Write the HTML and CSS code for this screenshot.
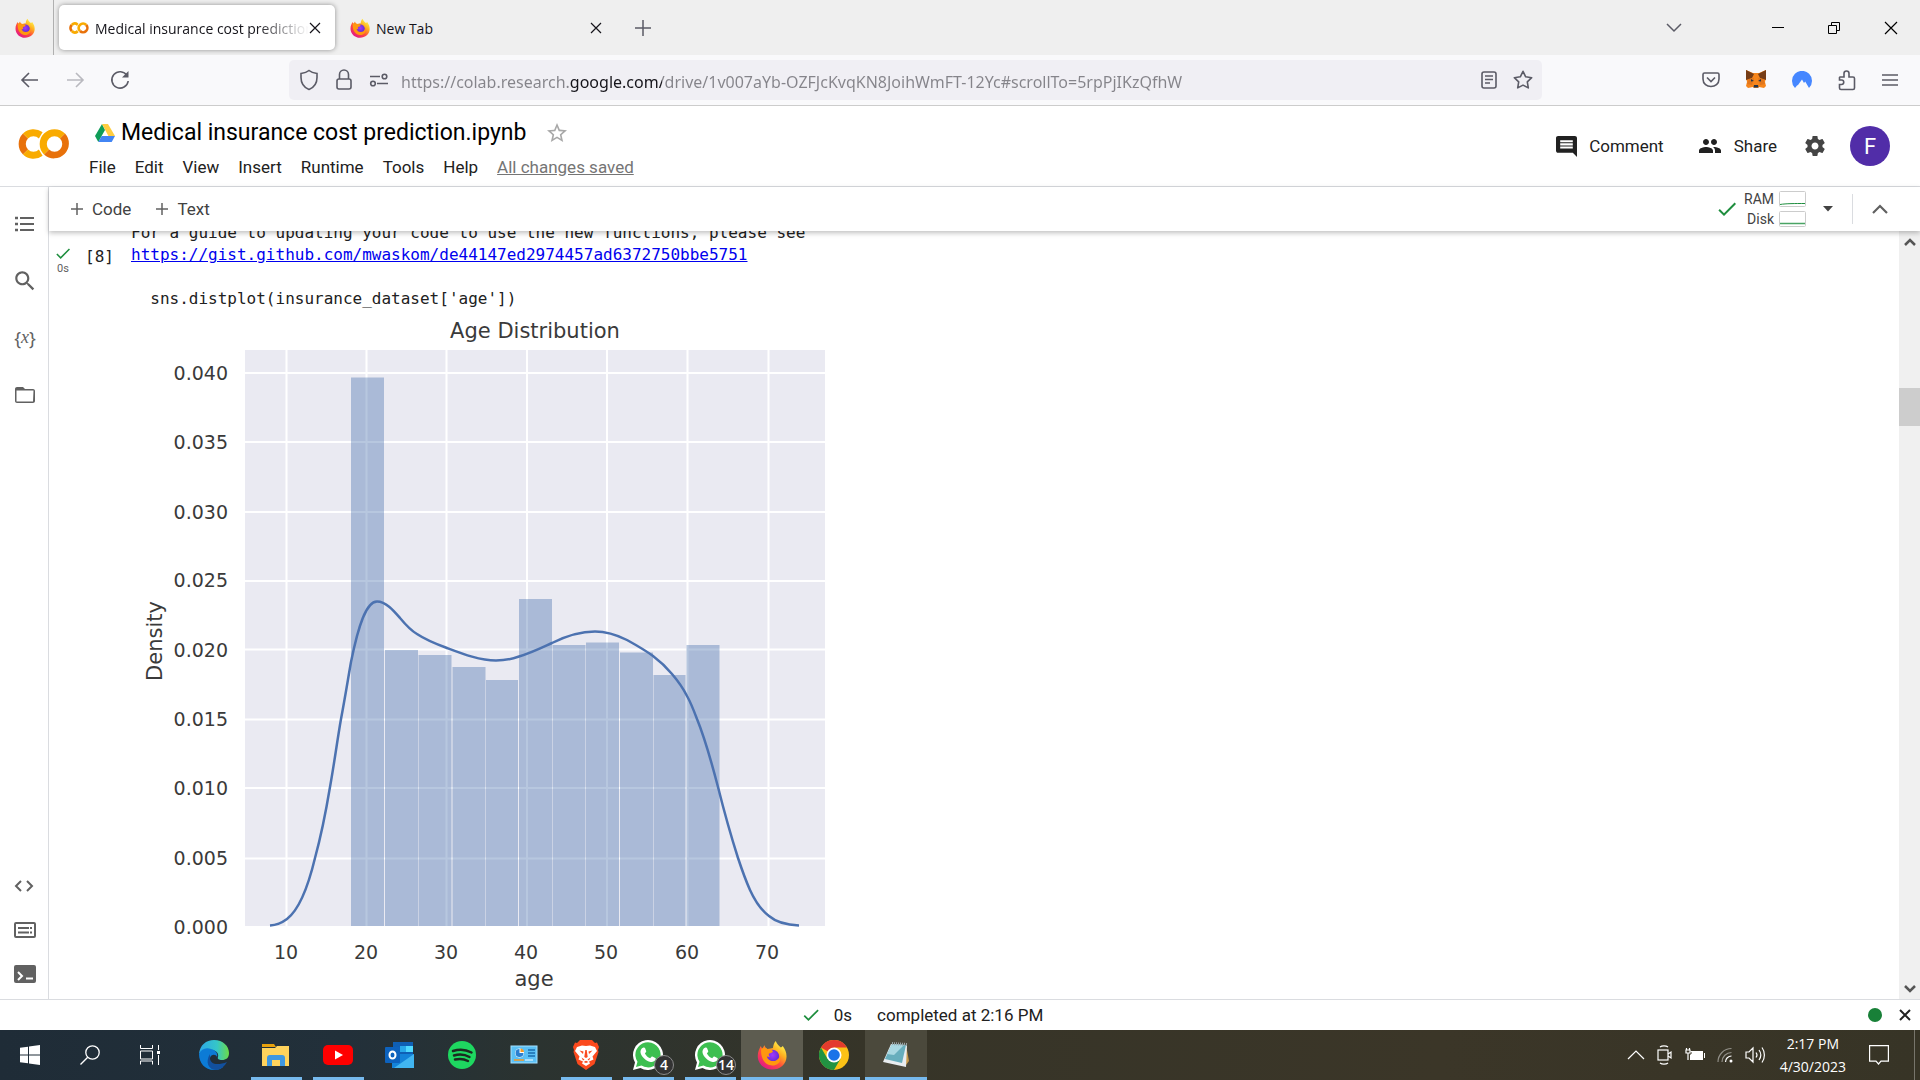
FILE: index.html
```html
<!DOCTYPE html>
<html lang="en">
<head>
<meta charset="utf-8">
<title>Medical insurance cost prediction.ipynb</title>
<link rel="stylesheet" href="styles.css">
</head>
<body>
<svg class="defs" aria-hidden="true">
  <defs>
    <linearGradient id="ff-body" x1="0.85" y1="0.1" x2="0.2" y2="0.95"><stop offset="0" stop-color="#fff44f"/><stop offset="0.3" stop-color="#ffb01f"/><stop offset="0.6" stop-color="#ff4f3c"/><stop offset="1" stop-color="#e31587"/></linearGradient>
    <radialGradient id="ff-core" cx="0.5" cy="0.4" r="0.6"><stop offset="0" stop-color="#a238ff"/><stop offset="1" stop-color="#592acb"/></radialGradient>
    <symbol id="firefox" viewBox="0 0 32 32">
      <path fill="url(#ff-body)" d="M20 1c1 3 3.500 5 5.500 7 1.200-.5 1.500-1 2-1.500 2.500 3.500 4 7 4 11C31.500 25.500 24.500 31.500 16 31.500S.8 25 .8 17C.8 12.500 2.500 9.500 4 6.500l1.500 2.800L8 5.500c.5 2 1.500 3 3 4 3-.5 4.500-.5 6-1C17.500 5.500 18 3 20 1z"/>
      <circle cx="16.500" cy="17.500" r="7.200" fill="url(#ff-core)"/>
      <path fill="#ff980e" d="M4.500 9.500C7 8 10 8.500 11.500 10c2.500-.3 4.500.5 5.500 2-.5 1.500-2.500 2.200-4.200 2.500-.6 1.500 0 2.500 1.200 3.200-1.500.5-2.600.2-3.500-.4.500 3.200 3.500 5.200 6.500 5.200 4 0 7-2.800 7.300-6.500C27 25 20 28 15 27 7.500 26 3.500 18 4.500 9.500z"/>
    </symbol>
    <symbol id="colab" viewBox="0 5 24 14">
      <path fill="#e8710a" d="M4.540 9.460 2.190 7.100a6.930 6.930 0 0 0 0 9.790l2.360-2.360a3.590 3.590 0 0 1-.01-5.070z"/>
      <path fill="#f9ab00" d="M2.190 7.100 4.540 9.460a3.590 3.590 0 0 1 5.080 0l1.710-2.930-.1-.08a6.930 6.930 0 0 0-9.040.65zM11.340 17.460 9.620 14.540a3.590 3.590 0 0 1-5.080 0L2.190 16.900a6.930 6.930 0 0 0 9 .65zM12 7.100a6.930 6.930 0 0 0 0 9.790l2.360-2.360a3.590 3.590 0 1 1 5.080-5.080L21.810 7.100a6.930 6.930 0 0 0-9.810 0z"/>
      <path fill="#e8710a" d="M21.810 7.100 19.460 9.460a3.590 3.590 0 0 1-5.080 5.080L12.020 16.900a6.930 6.930 0 0 0 9.790-9.790z"/>
    </symbol>
    <symbol id="check" viewBox="3 5 18 14"><path fill="#1e8e3e" d="M9 16.170 4.830 12l-1.420 1.410L9 19 21 7l-1.410-1.410z"/></symbol>
    <symbol id="cross" viewBox="0 0 12 12"><path d="M1 1l10 10M11 1 1 11" fill="none" stroke="currentColor" stroke-width="1.200"/></symbol>
    <symbol id="whatsapp" viewBox="0 0 30 30">
      <path fill="#fff" d="M0 30 2 22.500A15 15 0 1 1 7.500 28z"/>
      <path fill="#3dbf50" d="M3 27l1.500-5.200A12.600 12.600 0 1 1 8.500 25.600z"/>
      <path fill="#fff" d="M10.500 7.500c.7-.2 1.200 0 1.500.6l1.200 2.800c.2.500 0 .9-1.300 2.500 1.300 2.400 2.900 3.800 5.300 4.800 1.300-1.700 1.600-2 2.200-1.700l2.900 1.400c.5.300.5.600.3 1.400-.8 2.300-3.200 3-5 2.600-4.800-1-8.900-5-10-8.900-.5-2.200.5-4.900 2.900-5.500z"/>
    </symbol>
  </defs>
</svg>

<header class="tabs">
  <div class="tab-pinned"><svg width="20" height="20"><use href="#firefox"/></svg></div>
  <div class="tab tab-active">
    <svg width="20" height="12"><use href="#colab"/></svg>
    <span class="tab-title tab-fade">Medical insurance cost prediction</span>
    <button class="bare" aria-label="Close tab"><svg width="12" height="12"><use href="#cross"/></svg></button>
  </div>
  <div class="tab">
    <svg width="20" height="20"><use href="#firefox"/></svg>
    <span class="tab-title">New Tab</span>
    <button class="bare" aria-label="Close tab"><svg width="12" height="12"><use href="#cross"/></svg></button>
  </div>
  <button class="bare new-tab" aria-label="New tab"><svg width="16" height="16"><path d="M8 0v16M0 8h16" stroke="#5b5b66" stroke-width="1.500"/></svg></button>
  <div class="window-tools">
    <button class="bare list-tabs" aria-label="List all tabs"><svg width="16" height="10"><path d="M1 1l7 7 7-7" fill="none" stroke="#5b5b66" stroke-width="1.500"/></svg></button>
    <button class="bare" aria-label="Minimize"><svg width="12" height="12"><path d="M0 5.500h12" stroke="#000"/></svg></button>
    <button class="bare" aria-label="Restore"><svg width="12" height="12"><path d="M.5 3.500h8v8h-8zM3.500 3.500v-3h8v8h-3" fill="none" stroke="#000"/></svg></button>
    <button class="bare" aria-label="Close window"><svg width="14" height="14"><path d="M1 1l12 12M13 1 1 13" stroke="#000" stroke-width="1.200"/></svg></button>
  </div>
</header>

<nav class="navbar">
  <button class="bare" aria-label="Back"><svg width="20" height="20"><path d="M18 10H2M9 3l-7 7 7 7" class="line"/></svg></button>
  <button class="bare dim" aria-label="Forward"><svg width="20" height="20"><path d="M2 10h16M11 3l7 7-7 7" class="line"/></svg></button>
  <button class="bare" aria-label="Reload"><svg width="20" height="20"><path d="M17 5.500A8.200 8.200 0 1 0 18.200 11" class="line"/><path d="M18.500 1v6.500H12z" fill="#5b5b66"/></svg></button>
  <div class="urlbar">
    <svg width="20" height="22"><path d="M10 1.500c2 1.700 5 2.600 8 3v4c0 5.500-3 10-8 12-5-2-8-6.500-8-12v-4c3-.4 6-1.300 8-3z" class="line"/></svg>
    <svg width="18" height="22"><path d="M4.500 10V5.500a4.500 4.500 0 0 1 9 0V10" class="line"/><rect x="2" y="10" width="14" height="10" rx="2" class="line"/></svg>
    <svg width="20" height="14"><path d="M1 3.500h10M8 10.500h11" class="line"/><circle cx="15.500" cy="3.500" r="2.300" class="line"/><circle cx="4" cy="10.500" r="2.300" class="line"/></svg>
    <input class="url" type="text" aria-label="Address" value="https://colab.research.google.com/drive/1v007aYb-OZFJcKvqKN8JoihWmFT-12Yc#scrollTo=5rpPjIKzQfhW">
    <button class="bare" aria-label="Reader view"><svg width="16" height="18"><rect x="1" y="1" width="14" height="16" rx="2" class="line"/><path d="M4 5h8M4 8.500h8M4 12h5" class="line"/></svg></button>
    <button class="bare" aria-label="Bookmark"><svg width="20" height="20" viewBox="0 0 20 20"><path d="M10 1.300l2.700 5.500 6 .9-4.400 4.200 1 6-5.300-2.800-5.300 2.800 1-6L1.300 7.700l6-.9z" class="line" stroke-linejoin="round"/></svg></button>
  </div>
  <div class="extensions">
    <button class="bare" aria-label="Pocket"><svg width="18" height="18"><path d="M2.500 2h13c.8 0 1.500.6 1.500 1.500V8c0 10-16 10-16 0V3.500C1 2.600 1.700 2 2.500 2z" class="line"/><path d="M5 6.500l4 4 4-4" class="line"/></svg></button>
    <button class="bare" aria-label="MetaMask"><svg width="20" height="20"><path fill="#f6851b" d="M0 0l7 3h6l7-3v8l-1 4 1 4-2 2-5-1-1 1H8l-1-1-5 1-2-2 1-4-1-4z"/><path fill="#763d16" d="M0 0l8 4-2 4-6 2zM20 0l-8 4 2 4 6 2z"/><path fill="#e2761b" d="M3 9l5-1-2 7-5-1zM17 9l-5-1 2 7 5-1z"/><path fill="#233447" d="M5 9l3 2-3 .5zM15 9l-3 2 3 .5zM8 15h4l.5 2.500h-5z"/></svg></button>
    <button class="bare" aria-label="VPN"><svg width="20" height="18"><path fill="#4687ff" d="M3 17A10 10 0 1 1 17 17l-3.800-6.500-1.200 1.500-2-3.500-4 5.500-1 .5z"/></svg></button>
    <button class="bare" aria-label="Extensions"><svg width="18" height="22"><path d="M2 8h4V4.500a2.500 2.500 0 0 1 5 0V8h4c1 0 1.500.5 1.500 1.500V19c0 1-.5 1.500-1.500 1.500H3c-1 0-1.500-.5-1.500-1.500v-3.500h2a2 2 0 0 0 0-4.500h-2V8.500z" class="line"/></svg></button>
    <button class="bare" aria-label="Menu"><svg width="16" height="14"><path d="M0 2h16M0 7h16M0 12h16" class="line"/></svg></button>
  </div>
</nav>

<header class="doc-head">
  <a class="logo" href="#" aria-label="Colab"><svg width="52" height="30"><use href="#colab"/></svg></a>
  <div class="doc-info">
    <div class="doc-title-row">
      <svg width="20" height="18"><path fill="#0f9d58" d="M7 0 0 12l3.300 6L10 6z"/><path fill="#ffcd40" d="M7 0h6l7 12h-6.600z"/><path fill="#4285f4" d="M6.700 12H20l-3.300 6H3.300z"/></svg>
      <h1>Medical insurance cost prediction.ipynb</h1>
      <button class="bare star" aria-label="Star"><svg width="22" height="22" viewBox="1 1 22 22"><path fill="#a8a8a8" d="M22 9.240l-7.190-.62L12 2 9.190 8.630 2 9.240l5.460 4.730L5.820 21 12 17.270 18.180 21l-1.630-7.030L22 9.240zM12 15.400l-3.760 2.270 1-4.280-3.320-2.880 4.380-.38L12 6.100l1.710 4.040 4.380.38-3.320 2.880 1 4.280L12 15.400z"/></svg></button>
    </div>
    <nav class="menu">
      <button class="bare">File</button><button class="bare">Edit</button><button class="bare">View</button><button class="bare">Insert</button><button class="bare">Runtime</button><button class="bare">Tools</button><button class="bare">Help</button><a href="#">All changes saved</a>
    </nav>
  </div>
  <button class="bare action"><svg width="21" height="21" viewBox="2 2 20 20"><path fill="#212121" d="M21.990 4c0-1.100-.89-2-1.990-2H4c-1.100 0-2 .9-2 2v12c0 1.100.9 2 2 2h14l4 4-.01-18zM18 14H6v-2h12v2zm0-3H6V9h12v2zm0-3H6V6h12v2z"/></svg>Comment</button>
  <button class="bare action share"><svg width="24" height="24" viewBox="0 0 24 24"><path fill="#212121" d="M16 11c1.660 0 2.990-1.340 2.990-3S17.660 5 16 5c-1.660 0-3 1.340-3 3s1.340 3 3 3zm-8 0c1.660 0 2.990-1.340 2.990-3S9.660 5 8 5C6.340 5 5 6.340 5 8s1.340 3 3 3zm0 2c-2.330 0-7 1.170-7 3.500V19h14v-2.500c0-2.330-4.670-3.500-7-3.500zm8 0c-.29 0-.62.02-.97.05 1.160.84 1.970 1.970 1.970 3.450V19h6v-2.500c0-2.330-4.670-3.500-7-3.500z"/></svg>Share</button>
  <button class="bare gear" aria-label="Settings"><svg width="24" height="24" viewBox="0 0 24 24"><path fill="#444" d="M19.430 12.980c.04-.32.07-.64.07-.98s-.03-.66-.07-.98l2.110-1.650c.19-.15.24-.42.12-.64l-2-3.460c-.12-.22-.39-.3-.61-.22l-2.490 1c-.52-.4-1.080-.73-1.690-.98l-.38-2.650C14.460 2.180 14.250 2 14 2h-4c-.25 0-.46.18-.49.42l-.38 2.650c-.61.25-1.170.59-1.690.98l-2.490-1c-.23-.09-.49 0-.61.22l-2 3.460c-.13.22-.07.49.12.64l2.110 1.650c-.04.32-.07.65-.07.98s.03.66.07.98l-2.110 1.650c-.19.15-.24.42-.12.64l2 3.460c.12.22.39.3.61.22l2.490-1c.52.4 1.080.73 1.690.98l.38 2.650c.03.24.24.42.49.42h4c.25 0 .46-.18.49-.42l.38-2.650c.61-.25 1.170-.59 1.690-.98l2.490 1c.23.09.49 0 .61-.22l2-3.460c.12-.22.07-.49-.12-.64l-2.110-1.650zM12 15.500c-1.930 0-3.500-1.570-3.500-3.500s1.570-3.500 3.500-3.500 3.500 1.570 3.500 3.500-1.570 3.500-3.500 3.500z"/></svg></button>
  <button class="bare avatar" aria-label="Account">F</button>
</header>

<div class="workspace">
  <aside class="rail">
    <button class="bare" aria-label="Table of contents"><svg width="20" height="16"><path d="M5 2h14M5 8h14M5 14h14" stroke="#616161" stroke-width="2"/><path d="M0 2h3M0 8h3M0 14h3" stroke="#616161" stroke-width="2.500"/></svg></button>
    <button class="bare" aria-label="Find"><svg width="26" height="26" viewBox="0 0 24 24"><path fill="#616161" d="M15.500 14h-.79l-.28-.27C15.410 12.590 16 11.110 16 9.500 16 5.910 13.090 3 9.500 3S3 5.910 3 9.500 5.910 16 9.500 16c1.610 0 3.090-.59 4.230-1.570l.27.28v.79l5 4.990L20.490 19l-4.990-5zm-6 0C7.010 14 5 11.990 5 9.500S7.010 5 9.500 5 14 7.010 14 9.500 11.990 14 9.500 14z"/></svg></button>
    <button class="bare vars" aria-label="Variables">{<i>x</i>}</button>
    <button class="bare" aria-label="Files"><svg width="20" height="16" viewBox="2 4 20 16" preserveAspectRatio="none"><path fill="#616161" d="M20 6h-8l-2-2H4c-1.100 0-2 .9-2 2v12c0 1.100.9 2 2 2h16c1.100 0 2-.9 2-2V8c0-1.100-.9-2-2-2zm0 12.500H3.500V7.500h17z"/></svg></button>
    <div class="rail-bottom">
      <button class="bare" aria-label="Code snippets"><svg width="20" height="12"><path d="M7 1 2 6l5 5M13 1l5 5-5 5" fill="none" stroke="#616161" stroke-width="2"/></svg></button>
      <button class="bare" aria-label="Command palette"><svg width="22" height="16"><rect x="1" y="1" width="20" height="14" rx="1" fill="none" stroke="#616161" stroke-width="2"/><path d="M4 6h11M4 10.500h11M16 6h2M16 10.500h2" stroke="#616161" stroke-width="2"/></svg></button>
      <button class="bare" aria-label="Terminal"><svg width="22" height="18"><rect width="22" height="18" rx="2" fill="#616161"/><path d="M4 7l4 4-4 4" fill="none" stroke="#fff" stroke-width="2"/><path d="M12 13.500h7" stroke="#fff" stroke-width="2"/></svg></button>
    </div>
  </aside>

  <main class="notebook">
    <div class="cell-bar">
      <button class="bare add"><svg width="12" height="12"><path d="M6 0v12M0 6h12" stroke="#616161" stroke-width="1.500"/></svg>Code</button>
      <button class="bare add"><svg width="12" height="12"><path d="M6 0v12M0 6h12" stroke="#616161" stroke-width="1.500"/></svg>Text</button>
      <div class="resources">
        <svg width="18" height="14"><use href="#check"/></svg>
        <div class="meters">
          <span>RAM</span><svg width="27" height="16"><rect x=".5" y=".5" width="26" height="15" rx="1" fill="#fff" stroke="#ccc"/><path d="M1 13.500c6-1 15-1 25-1" fill="none" stroke="#1e8e3e"/></svg>
          <span>Disk</span><svg width="27" height="16"><rect x=".5" y=".5" width="26" height="15" rx="1" fill="#fff" stroke="#ccc"/><path d="M1 12.500h25" stroke="#1e8e3e" stroke-width="1.500" opacity=".8"/></svg>
        </div>
        <button class="bare caret" aria-label="Runtime options"><svg width="10" height="6"><path d="M0 0h10L5 5.500z" fill="#424242"/></svg></button>
        <span class="divider"></span>
        <button class="bare" aria-label="Collapse header"><svg width="16" height="10"><path d="M1 9l7-7 7 7" fill="none" stroke="#616161" stroke-width="2.200"/></svg></button>
      </div>
    </div>

    <div class="scroll-area">
      <section class="cell">
        <div class="run-state"><svg width="14" height="11"><use href="#check"/></svg><span>0s</span></div>
        <div class="exec-count">[8]</div>
        <div class="output">
<pre>For a guide to updating your code to use the new functions, please see
<a href="#">https://gist.github.com/mwaskom/de44147ed2974457ad6372750bbe5751</a>

  sns.distplot(insurance_dataset['age'])</pre>
          <svg class="chart" width="700" height="686" viewBox="131 310 700 686" role="img" aria-label="Age Distribution">
            <text x="535" y="338" class="t-title">Age Distribution</text>
            <rect x="245" y="350" width="580" height="576" fill="#eaeaf2"/>
            <path class="grid" d="M286.500 350v576M366.500 350v576M446.500 350v576M527 350v576M607 350v576M687.500 350v576M768.500 350v576M245 373h580M245 442h580M245 512h580M245 581h580M245 649.500h580M245 719.500h580M245 788h580M245 858.500h580"/>
            <path class="bars" d="M351 926V377.500h33V926zM385 926V650h33V926zM418.500 926V655h33V926zM452.500 926V667h33V926zM486 926V680h32V926zM519 926V599h33V926zM552.500 926V645h33V926zM586 926V642.500h33V926zM620 926V652.500h33V926zM653.500 926V675h32V926zM686.500 926V645h33V926z"/>
            <path class="kde" d="M270 925.500C278 925 283 922 287 919 300 909 309 883 315 858 321 836 326 811 330 787 334 765 337 742 341 719 345 698 348 679 351 662 358 627 366 601.500 377 601.500 386 601.500 394 611 400 618 405 624 410 630 417 634 426 640 436 644 447 648 463 654 480 660.500 496 660.500 505 660.500 512 659 519 656.500 531 653 541 648 552 643 566 636 580 631.500 595 631.500 607 631.500 617 635 627 640 636 645 645 650 653 656 661 662 667 668 672 674 678 681 683 688 687 696 691 703 694 711 697 719 706 741 712 764 718 787 724 811 731 836 738 858 742 870 746 881 750 890 755 901 761 910 769 916 776 922 787 925 799 925.500"/>
            <g class="t-y"><text x="228" y="380">0.040</text><text x="228" y="449">0.035</text><text x="228" y="519">0.030</text><text x="228" y="587">0.025</text><text x="228" y="657">0.020</text><text x="228" y="726">0.015</text><text x="228" y="795">0.010</text><text x="228" y="865">0.005</text><text x="228" y="934">0.000</text></g>
            <g class="t-x"><text x="286" y="959">10</text><text x="366" y="959">20</text><text x="446" y="959">30</text><text x="526" y="959">40</text><text x="606" y="959">50</text><text x="687" y="959">60</text><text x="767" y="959">70</text></g>
            <text x="534" y="986" class="t-title">age</text>
            <text transform="translate(162 641) rotate(-90)" class="t-title">Density</text>
          </svg>
        </div>
      </section>
      <div class="scrollbar">
        <svg width="12" height="9"><path d="M1 7l5-5 5 5" fill="none" stroke="#555" stroke-width="2.500"/></svg>
        <span class="thumb"></span>
        <svg class="down" width="12" height="9"><path d="M1 2l5 5 5-5" fill="none" stroke="#555" stroke-width="2.500"/></svg>
      </div>
    </div>
  </main>
</div>

<footer class="status">
  <div class="status-text"><svg width="16" height="12"><use href="#check"/></svg><span>0s</span><span>completed at 2:16 PM</span></div>
  <span class="dot"></span>
  <button class="bare" aria-label="Dismiss"><svg width="14" height="14"><path d="M2 2l10 10M12 2 2 12" stroke="#212121" stroke-width="2"/></svg></button>
</footer>

<div class="taskbar">
  <button class="bare sys" aria-label="Start"><svg width="20" height="20"><path fill="#fff" d="M0 2.800 8 1.700V9.500H0zM9 1.500 20 0v9.500H9zM0 10.500h8v7.800L0 17.200zM9 10.500h11V20L9 18.500z"/></svg></button>
  <button class="bare sys" aria-label="Search"><svg width="20" height="20"><circle cx="12.500" cy="7.500" r="6.700" fill="none" stroke="#fff" stroke-width="1.300"/><path d="M7.700 12.300.5 19.500" stroke="#fff" stroke-width="1.300"/></svg></button>
  <button class="bare sys" aria-label="Task view"><svg width="20" height="20"><path d="M.5 0v3.500h12V0M.5 19.500V16h12v3.500M.5 6h12v8H.5zM18.500 0v5M18.500 10v10" fill="none" stroke="#fff"/><path d="M17 6h3v3h-3z" fill="#fff"/></svg></button>
  <span class="sys-gap"></span>
  <button class="bare app" aria-label="Edge"><svg width="30" height="30"><defs><linearGradient id="edge-top"><stop offset="0" stop-color="#2ca7e8"/><stop offset=".6" stop-color="#35c6c8"/><stop offset="1" stop-color="#6bdc47"/></linearGradient></defs><path fill="url(#edge-top)" d="M0 14C1 5 7 0 15 0c9 0 15 6 15 13 0 5-3 7-7 7-3 0-5-1-4-3 1-3-1-7-7-7C7 10 2 11 0 14z"/><path fill="#0c7bd6" d="M0 14c2-5 7-7 12-5 5 1 7 5 6 8-1-3-6-3-7 1-1 6 5 10 13 9-2 2-5 3-9 3C6 30 0 23 0 14z"/><path fill="#12509e" d="M11 18c0 6 7 8 17 4-2 4-6 7-10 8C9 30 6 22 11 14z"/></svg></button>
  <button class="bare app open" aria-label="File Explorer"><svg width="28" height="24"><path fill="#e8a10c" d="M0 1h12l2 3H0z"/><path fill="#ffd35c" d="M0 5h13l2-2h12v20H0z"/><path fill="#3f97e0" d="M5 23V15c0-2 1-3 3-3h12c2 0 3 1 3 3v8h-5v-6h-8v6z"/></svg></button>
  <button class="bare app open" aria-label="YouTube"><svg width="30" height="22"><rect y="1" width="30" height="20" rx="5" fill="#f00"/><path fill="#fff" d="M12 6.500l8 4.500-8 4.500z"/></svg></button>
  <button class="bare app" aria-label="Outlook"><svg width="30" height="28"><path fill="#0f5fb4" d="M8 1h20v14H8z"/><path fill="#28a8ea" d="M15 5h6v6h-6z"/><path fill="#50d9ff" d="M21 5h7v6h-7z"/><path fill="#1382d8" d="M7 13h22v14H7z"/><path fill="#41b5f0" d="M29 13v14H9z"/><rect y="6" width="15" height="16" rx="1" fill="#0d62bd"/><ellipse cx="7.500" cy="14" rx="3" ry="3.500" fill="none" stroke="#fff" stroke-width="2"/></svg></button>
  <button class="bare app" aria-label="Spotify"><svg width="28" height="28"><circle cx="14" cy="14" r="14" fill="#1ed760"/><path d="M5 10c6-2 13-1.500 18.500 1.500M6 14.500c5-1.500 11-1 15.500 1.500M7 18.500c4-1 9-.7 13 1.500" fill="none" stroke="#1c2a20" stroke-width="2.500" stroke-linecap="round"/></svg></button>
  <button class="bare app" aria-label="Control Panel"><svg width="28" height="20"><rect x="1" y="1" width="26" height="17" fill="#5bc0f5" stroke="#a5e1ff"/><circle cx="9.500" cy="8" r="4.500" fill="#fff"/><path d="M9.500 8V4a4 4 0 1 0 4 4z" fill="#2a7fd0"/><path d="M10.500 7V3.500A4 4 0 0 1 14 7z" fill="#f59a23"/><path d="M18 5h7M18 8h7M18 11h7" stroke="#1b6cae" stroke-width="1.500"/><path d="M4 15h10" stroke="#f59a23" stroke-width="1.500"/><path d="M15 15h8" stroke="#fff"/></svg></button>
  <button class="bare app open" aria-label="Brave"><svg width="26" height="30"><path fill="#fb4a1e" d="M7 0h12l3 3 2-.5 2 4.500-1 3 .5 2-4 12L13 30 4.500 24 .5 12 1 10 0 7l2-4.500L4 3z"/><path fill="#fff" d="M4 7l5-1.500L13 6l4-.5L22 7l2 4-4.500 5.500 1 3-4.500 2 1 2L13 26l-4-2.500 1-2-4.500-2 1-3L2 11z"/><path fill="#fb4a1e" d="M6.500 10.500l4 1-.5 2.500zM19.500 10.500l-4 1 .5 2.500zM12.300 10h1.400l1 7-1.700 1-1.700-1zM8.500 17.500l3 2-1.500 1zM17.500 17.500l-3 2 1.500 1zM10.500 22l2.500-1.200 2.500 1.200-2.500 1z"/></svg></button>
  <button class="bare app open" aria-label="WhatsApp, 4 unread"><svg width="30" height="30"><use href="#whatsapp"/></svg><span class="badge">4</span></button>
  <button class="bare app open" aria-label="WhatsApp, 14 unread"><svg width="30" height="30"><use href="#whatsapp"/></svg><span class="badge">14</span></button>
  <button class="bare app open current" aria-label="Firefox"><svg width="30" height="30"><use href="#firefox"/></svg></button>
  <button class="bare app open" aria-label="Chrome"><svg width="30" height="30"><circle cx="15" cy="15" r="15" fill="#fbc116"/><path fill="#e33b2e" d="M2 7.500a15 15 0 0 1 26 0H15v7.500z"/><path fill="#229342" d="M2 7.500A15 15 0 0 0 15 30l6.500-11.200L15 15 8.500 18.800z"/><circle cx="15" cy="15" r="7.500" fill="#fff"/><circle cx="15" cy="15" r="5.800" fill="#1a73e8"/></svg></button>
  <button class="bare app open recent" aria-label="Notepad"><svg width="28" height="28"><path fill="#c89a4a" d="M24 4l3 16-3 4z"/><path fill="#e9edf0" d="M9 3l16 1-1 22-23-5z"/><path fill="#67aebd" d="M10 3l14 1-4 18L3 18z"/><path fill="#a9d8e2" d="M10 3l12 1-10 10-7-1z"/><path d="M10 2.500l15 1" stroke="#9aa5a9" stroke-width="3" stroke-dasharray="1 1"/></svg></button>
  <div class="tray">
    <svg width="18" height="10"><path d="M1 9l8-8 8 8" class="tl"/></svg>
    <svg width="16" height="20"><rect x="1" y="5" width="10" height="10" class="tl"/><path d="M11 9l3-2v6l-3-2M3 2c2-1.500 6-1.500 8 0M3 18c2 1.500 6 1.500 8 0" class="tl"/></svg>
    <svg width="20" height="16"><path fill="#fff" d="M5 4h13v9H5v-5l2-2zM19 6h1v5h-1z"/><path d="M1 3h4v3H1zM1.500 1v2M4.500 1v2M3 6v7" class="tl"/></svg>
    <svg width="16" height="16"><circle cx="14" cy="14" r="1.500" fill="#fff"/><path d="M8.500 15a6 6 0 0 1 6-6" class="tl"/><path d="M5 15a9.500 9.500 0 0 1 9.500-9.500M1 15A13.500 13.500 0 0 1 14.500 1.500" class="tl faint"/></svg>
    <svg width="20" height="18"><path d="M1 6h3l4-4v14l-4-4H1zM11 6.500c1.200 1.500 1.200 3.500 0 5M14 4c2.200 3 2.200 7 0 10M17 1.500c3.200 4.500 3.200 10.500 0 15" class="tl"/></svg>
  </div>
  <div class="clock"><span>2:17 PM</span><span>4/30/2023</span></div>
  <button class="bare notify" aria-label="Notifications"><svg width="20" height="20"><path d="M.6.600h18.800v15.500H12L9.500 19 7 16.100H.600z" class="tl"/></svg></button>
  <span class="peek"></span>
</div>
</body>
</html>
```

FILE: styles.css
```css
* { box-sizing: border-box; }

body {
  margin: 0;
  height: 100vh;
  display: flex;
  flex-direction: column;
  overflow: hidden;
  background: #fff;
  color: #212121;
  font-family: Roboto, "Liberation Sans", sans-serif;
  font-size: 17px;
}

svg { display: block; flex: none; }
.defs { position: absolute; width: 0; height: 0; }
.line { fill: none; stroke: #5b5b66; stroke-width: 1.6; }
.tl { fill: none; stroke: #fff; stroke-width: 1.2; }
.faint { opacity: 0.45; }

.bare {
  display: flex;
  align-items: center;
  justify-content: center;
  flex: none;
  margin: 0;
  padding: 0;
  border: 0;
  background: none;
  color: inherit;
  font: inherit;
}

/* Browser tabs */
.tabs {
  display: flex;
  align-items: center;
  flex: none;
  height: 55px;
  background: #efefef;
  color: #15141a;
  font-family: "Open Sans", "Noto Sans", sans-serif;
  font-size: 14px;
}
.tab-pinned {
  display: flex;
  align-items: center;
  align-self: stretch;
  width: 54px;
  padding-left: 15px;
  border-right: 1px solid #b0b0b0;
}
.tab {
  display: flex;
  align-items: center;
  gap: 6px;
  width: 276px;
  height: 45px;
  margin-left: 5px;
  padding: 0 14px 0 10px;
  border-radius: 5px;
}
.tab-active { background: #fff; box-shadow: 0 0 5px rgba(0, 0, 0, 0.4); }
.tab-title { flex: 1; overflow: hidden; padding-top: 2px; white-space: nowrap; }
.tab-fade { mask-image: linear-gradient(to right, #000 75%, transparent); margin-right: -6px; }
.new-tab { margin-left: 19px; }
.window-tools {
  display: flex;
  align-items: center;
  gap: 44px;
  margin-left: auto;
  padding-right: 22px;
}
.list-tabs { margin-right: 46px; }

/* Address row */
.navbar {
  display: flex;
  align-items: center;
  gap: 25px;
  flex: none;
  height: 51px;
  padding: 0 22px 0 20px;
  background: #f9f9fb;
  border-bottom: 1px solid #ccc;
}
.dim { opacity: 0.4; }
.urlbar {
  display: flex;
  align-items: center;
  gap: 16px;
  flex: 1;
  height: 40px;
  margin: 0 135px 0 134px;
  padding: 0 9px 0 10px;
  border-radius: 5px;
  background: #f0eff4;
}
.url {
  flex: 1;
  min-width: 0;
  height: 30px;
  margin-left: -4px;
  padding: 3px 0 0;
  border: 0;
  background: linear-gradient(to right, #85848a 169px, #15141a 169px 261px, #85848a 261px);
  background-clip: text;
  color: transparent;
  font-family: "Noto Sans", "Open Sans", sans-serif;
  font-size: 16px;
}
.extensions { display: flex; align-items: center; gap: 26px; }

/* Notebook header */
.doc-head {
  display: flex;
  align-items: center;
  flex: none;
  height: 81px;
  padding-right: 30px;
  border-bottom: 1px solid #dadce0;
}
.logo { margin: -4px 0 0 18px; }
.doc-info { flex: 1; margin: 5px 0 0 19px; }
.doc-title-row { display: flex; align-items: center; height: 36px; padding-left: 6px; }
.doc-title-row h1 {
  margin: 0 0 0 6px;
  color: #000;
  font-size: 23px;
  font-weight: 400;
  line-height: 28px;
}
.star { margin-left: 20px; }
.menu { display: flex; gap: 19px; height: 32px; align-items: center; }
.menu a { color: #757575; }
.action { gap: 12px; }
.share { margin-left: 34px; }
.gear { margin-left: 26px; }
.avatar {
  width: 40px;
  height: 40px;
  margin-left: 23px;
  border-radius: 50%;
  background: #512da8;
  color: #fff;
  font-size: 22px;
}

/* Workspace */
.workspace { display: flex; flex: 1; min-height: 0; }
.rail {
  display: flex;
  flex-direction: column;
  align-items: center;
  width: 49px;
  padding: 8px 0 3px 2px;
  border-right: 1px solid #dadce0;
}
.rail > .bare { height: 57px; }
.rail-bottom { margin-top: auto; }
.rail-bottom .bare { height: 44px; }
.vars { color: #616161; font-family: "Noto Sans", sans-serif; font-size: 18px; }
.vars i { font-family: "Liberation Serif", serif; }
.notebook { display: flex; flex-direction: column; flex: 1; min-width: 0; }
.cell-bar {
  display: flex;
  align-items: center;
  gap: 25px;
  flex: none;
  height: 44px;
  padding: 0 32px 0 22px;
  background: #fff;
  box-shadow: 0 2px 5px rgba(0, 0, 0, 0.25);
  z-index: 1;
  color: #424242;
}
.add { gap: 9px; }
.resources { display: flex; align-items: center; margin-left: auto; }
.meters {
  display: grid;
  grid-template-columns: auto auto;
  gap: 0 5px;
  align-items: center;
  justify-items: end;
  margin-left: 8px;
  font-size: 14px;
  line-height: 20px;
}
.caret { margin-left: 17px; }
.divider { width: 1px; height: 30px; margin: 0 19px; background: #dadce0; }
.scroll-area { display: flex; flex: 1; min-height: 0; overflow: hidden; }
.cell { display: flex; flex: 1; font-family: "DejaVu Sans Mono", "Liberation Mono", monospace; font-size: 16px; }
.run-state {
  display: flex;
  flex-direction: column;
  align-items: center;
  gap: 3px;
  width: 28px;
  padding-top: 17px;
  color: #616161;
  font-family: Roboto, sans-serif;
  font-size: 11px;
}
.exec-count { width: 54px; padding: 16px 0 0 8px; }
.output pre { margin: -9px 0 0; font: inherit; line-height: 22px; }
.output a { color: #00e; }
.scrollbar {
  display: flex;
  flex-direction: column;
  align-items: center;
  width: 21px;
  padding: 7px 0 6px;
  background: #f0f0f0;
}
.thumb { width: 21px; height: 38px; margin-top: 141px; background: #cdcdcd; }
.down { margin-top: auto; }

/* Histogram */
.chart { font-family: "DejaVu Sans", sans-serif; font-size: 19px; fill: #3a3a3a; }
.t-title { font-size: 21px; text-anchor: middle; }
.t-y { text-anchor: end; }
.t-x { text-anchor: middle; }
.grid { stroke: #fff; stroke-width: 2; fill: none; }
.bars { fill: #4c72b0; fill-opacity: 0.4; }
.kde { fill: none; stroke: #4c72b0; stroke-width: 2.5; }

/* Execution status */
.status {
  display: flex;
  align-items: center;
  flex: none;
  height: 31px;
  padding-right: 8px;
  border-top: 1px solid #dadce0;
}
.status-text { display: flex; align-items: center; flex: 1; justify-content: center; padding-right: 22px; }
.status-text span { margin-left: 15px; }
.status-text span + span { margin-left: 25px; }
.dot { width: 14px; height: 14px; margin-right: 16px; border-radius: 50%; background: #188038; }

/* Taskbar */
.taskbar {
  display: flex;
  align-items: center;
  flex: none;
  height: 50px;
  background: linear-gradient(to right, #1f2c37, #22303a 18%, #2b3330 28%, #363428 45%, #3b3628 75%, #373426);
  color: #fff;
  font-family: "Open Sans", "Noto Sans", sans-serif;
}
.sys { width: 60px; height: 50px; }
.sys-gap { width: 3px; }
.app {
  position: relative;
  width: 62px;
  height: 50px;
  background-repeat: no-repeat;
  background-position: center bottom;
}
.open { background-image: linear-gradient(#76b9ed, #76b9ed); background-size: 51px 3px; }
.current { background-color: #5d5c50; background-size: 100% 3px; }
.recent { background-color: #4b493c; background-size: 100% 3px; }
.badge {
  position: absolute;
  left: 37px;
  top: 25px;
  width: 20px;
  height: 20px;
  border: 1px solid #8a8a8a;
  border-radius: 50%;
  background: #333;
  font-size: 14px;
  font-weight: 600;
  line-height: 18px;
  text-align: center;
}
.tray { display: flex; align-items: center; gap: 12px; margin-left: auto; }
.clock {
  display: flex;
  flex-direction: column;
  align-items: center;
  margin-left: 15px;
  font-size: 14px;
  line-height: 23px;
}
.notify { margin-left: 23px; }
.peek { width: 1px; height: 50px; margin: 0 5px 0 25px; background: #77756b; }
```
